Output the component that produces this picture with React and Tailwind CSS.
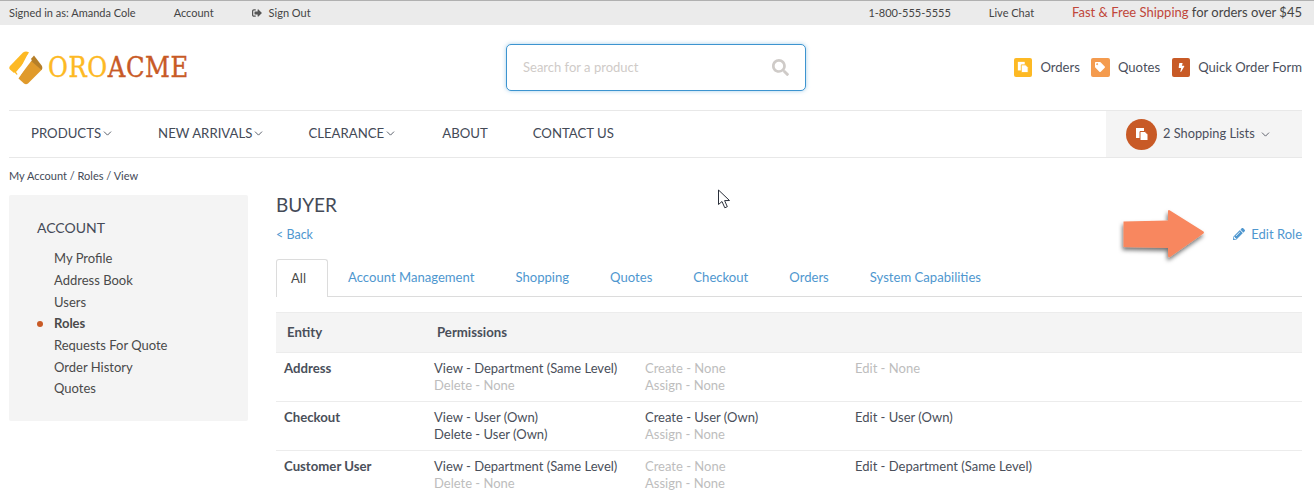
import React from "react";
import { FaSearch, FaPencilAlt, FaSignOutAlt, FaTag, FaBolt } from "react-icons/fa";
import { ChevronDown } from "lucide-react";

const Chev = ({ cls = "" }) => <ChevronDown size={13} strokeWidth={1.6} className={cls} />;

const Docs = ({ size = 12, back = "#fff", front = "#fff", cut = "#c85a26" }) => (
  <svg width={size} height={size} viewBox="0 0 14 14">
    <rect x="1" y="1" width="8" height="10" fill={back} />
    <path d="M5 4.5h5l3 3v6H5z" fill={front} stroke={cut} strokeWidth="1" />
  </svg>
);

const NavItem = ({ label, chev, cls }) => (
  <div className={`mb-[1px] flex items-center ${cls}`}>
    <span>{label}</span>
    {chev && <Chev cls="mt-[1px]" />}
  </div>
);

const rows = [
  {
    name: "Address",
    cells: [
      [["View - Department (Same Level)", 1], ["Delete - None", 0]],
      [["Create - None", 0], ["Assign - None", 0]],
      [["Edit - None", 0]],
    ],
  },
  {
    name: "Checkout",
    cells: [
      [["View - User (Own)", 1], ["Delete - User (Own)", 1]],
      [["Create - User (Own)", 1], ["Assign - None", 0]],
      [["Edit - User (Own)", 1]],
    ],
  },
  {
    name: "Customer User",
    cells: [
      [["View - Department (Same Level)", 1], ["Delete - None", 0]],
      [["Create - None", 0], ["Assign - None", 0]],
      [["Edit - Department (Same Level)", 1]],
    ],
  },
];

const side = ["My Profile", "Address Book", "Users", "Roles", "Requests For Quote", "Order History", "Quotes"];
const tabs = ["Account Management", "Shopping", "Quotes", "Checkout", "Orders", "System Capabilities"];

export default function App() {
  return (
    <div className="relative h-[497px] w-[1314px] overflow-hidden bg-white font-['Lato','Noto_Sans',sans-serif] text-[#4a4a4a]">
      {/* top bar */}
      <div className="flex h-[25px] items-center border-t border-[#b0b0b0] bg-[#ebebeb] pl-[9px] pr-3 text-[11px] text-[#444]">
        <span>Signed in as: Amanda Cole</span>
        <span className="ml-[38px]">Account</span>
        <span className="ml-[38px] flex items-center gap-[7px]">
          <FaSignOutAlt size={10} className="text-[#555]" />
          Sign Out
        </span>
        <span className="ml-auto">1-800-555-5555</span>
        <span className="ml-[38px]">Live Chat</span>
        <span className="ml-[38px] text-[13px]">
          <span className="text-[#c0463a]">Fast &amp; Free Shipping</span> for orders over $45
        </span>
      </div>

      {/* header */}
      <div className="relative flex h-[85px] items-center pl-[9px] pr-3">
        <div className="flex items-center">
          <svg width="34" height="34" viewBox="0 0 34 34">
            <path d="M14 1.5 Q17 -0.5 20 1.5 L5 22 L1 18.5 Q-0.5 17 1 15z" fill="#fdb924" />
            <path d="M15 2.5 L19.5 1.5 L8 24 L4 20z" fill="#fdb924" />
            <path d="M21 9 L32.5 16 Q34 17 32.5 19 L19 32.5 Q17 34 15 32.5 L9.5 27.5z" fill="#e09a2b" />
            <path d="M21 9 L25 4.5 L33 15 Q34 17 32.5 19z" fill="#b67f28" />
            <path d="M19.5 6.5 L23 9 L10.5 25.5 L7 21z" fill="#fff" />
          </svg>
          <span className="ml-[5px] font-['DejaVu_Serif',serif] text-[27px] leading-none tracking-[0.55px] [-webkit-text-stroke:0.35px] [font-stretch:condensed]">
            <span className="text-[#fdb924]">ORO</span>
            <span className="text-[#c85a26]">ACME</span>
          </span>
        </div>

        <div className="absolute left-[506px] top-[19px] flex h-[47px] w-[300px] items-center justify-between rounded-[5px] border border-[#3c94d0] bg-white pl-[16px] pr-[16px] text-[13px] text-[#cfcbc8] shadow-[0_0_4px_rgba(60,148,208,0.45)]">
          <span>Search for a product</span>
          <FaSearch size={17} className="text-[#cfcbc8]" />
        </div>

        <div className="ml-auto flex items-center text-[13.1px] text-[#4b4f5c]">
          <span className="flex h-[19px] w-[18px] items-center justify-center rounded-[2px] bg-[#fdb924]">
            <Docs size={12} cut="#fdb924" />
          </span>
          <span className="ml-[8px]">Orders</span>
          <span className="ml-[11px] flex h-[19px] w-[19px] items-center justify-center rounded-[2px] bg-[#f49b4e]">
            <FaTag size={10} className="text-white" />
          </span>
          <span className="ml-[8px]">Quotes</span>
          <span className="ml-[12px] flex h-[19px] w-[18px] items-center justify-center rounded-[2px] bg-[#c85a26]">
            <FaBolt size={9} className="text-white" />
          </span>
          <span className="ml-[8px]">Quick Order Form</span>
        </div>
      </div>

      {/* nav */}
      <div className="ml-[9px] mr-3 flex h-[48px] items-center border-y border-[#e8e8e8] text-[13.2px] text-[#444a57]">
        <NavItem label="PRODUCTS" chev cls="ml-[22px]" />
        <NavItem label="NEW ARRIVALS" chev cls="ml-[44px]" />
        <NavItem label="CLEARANCE" chev cls="ml-[43px]" />
        <NavItem label="ABOUT" cls="ml-[45px]" />
        <NavItem label="CONTACT US" cls="ml-[45px]" />
        <div className="ml-auto flex h-full w-[196px] items-center bg-[#f4f4f4] pl-5 text-[#4b4f5c]">
          <span className="flex h-[31px] w-[31px] items-center justify-center rounded-full bg-[#c85a26]">
            <Docs size={14} />
          </span>
          <span className="mb-[1px] ml-[6px] text-[12.8px]">2 Shopping Lists</span>
          <Chev cls="ml-[4px]" />
        </div>
      </div>

      {/* breadcrumb */}
      <div className="ml-[9px] mt-[10px] text-[11px] leading-[15px] text-[#444a57]">My Account / Roles / View</div>

      {/* main */}
      <div className="mt-[12px] flex pl-[9px] pr-3">
        <aside className="h-[226px] w-[239px] shrink-0 rounded-[2px] bg-[#f4f4f4] pl-[28px] pt-[23px]">
          <div className="text-[14px] leading-[20px] text-[#444a57]">ACCOUNT</div>
          <ul className="mt-[10.4px] text-[13px] text-[#4a4a4a]">
            {side.map((s) => (
              <li key={s} className={`relative h-[21.65px] pl-[17px] leading-[21px] ${s === "Roles" ? "font-bold" : ""}`}>
                {s === "Roles" && (
                  <span className="absolute left-0 top-[8px] h-[6px] w-[6px] rounded-full bg-[#c85a26]" />
                )}
                {s}
              </li>
            ))}
          </ul>
        </aside>

        <main className="ml-[28px] min-w-0 flex-1">
          <h1 className="text-[19px] leading-[20px] text-[#444a57]">BUYER</h1>
          <div className="mt-[11px] flex h-[18px] items-center justify-between text-[13px] leading-[18px] text-[#4f97cf]">
            <span className="text-[12.5px]">&lt; Back</span>
            <span className="flex -translate-y-px items-center gap-[6px]">
              <FaPencilAlt size={12} />
              Edit Role
            </span>
          </div>

          {/* tabs */}
          <div className="mt-[15px] flex h-[38px] items-stretch gap-[41px] border-b border-[#dcdcdc] text-[13.1px] text-[#4f97cf]">
            <div className="-mb-px -mr-[21px] flex w-[52px] items-center rounded-t-[3px] border border-b-0 border-[#dcdcdc] bg-white pl-[14px] text-[#4a4a4a]">
              All
            </div>
            {tabs.map((t) => (
              <div key={t} className="flex items-center">
                {t}
              </div>
            ))}
          </div>

          {/* table */}
          <div className="mt-[15px] text-[13px]">
            <div className="flex h-[41px] items-center border-y border-[#ececec] bg-[#f4f4f4] text-[13.2px] font-bold text-[#4a4f5a]">
              <span className="w-[161px] pl-[11px]">Entity</span>
              <span>Permissions</span>
            </div>
            {rows.map((r) => (
              <div key={r.name} className="flex h-[49px] border-b border-[#ececec] pt-[7px] leading-[17px]">
                <div className="w-[158px] pl-2 text-[13.2px] font-bold text-[#4a4f5a]">{r.name}</div>
                {r.cells.map((c, i) => (
                  <div key={i} className={i === 0 ? "w-[211px]" : "w-[210px]"}>
                    {c.map(([t, on]) => (
                      <div key={t} className={on ? "text-[#4a4f5a]" : "text-[#bdbdbd]"}>
                        {t}
                      </div>
                    ))}
                  </div>
                ))}
              </div>
            ))}
          </div>
        </main>
      </div>

      {/* annotation arrow */}
      <svg className="absolute left-[1118px] top-[205px]" width="92" height="62" viewBox="0 0 92 62">
        <defs>
          <filter id="s" x="-20%" y="-20%" width="140%" height="150%">
            <feDropShadow dx="-1" dy="3" stdDeviation="2" floodColor="#000" floodOpacity="0.55" />
          </filter>
        </defs>
        <path
          d="M5.5 16.5 L50 15.5 L50 6 Q50.5 4.5 52 5.5 L85.5 26.5 Q86.5 27.5 85.5 28.5 L52 52 Q50.5 53 50 51 L50 43 L5.5 42 Z"
          fill="#f8875e"
          filter="url(#s)"
        />
      </svg>

      {/* mouse cursor */}
      <svg className="absolute left-[717px] top-[189px]" width="14" height="21" viewBox="0 0 14 21">
        <path d="M1.5 1 V15.5 L5 12.5 L7.8 18.8 L10.3 17.7 L7.6 11.6 L12.5 11.5 Z" fill="#fff" stroke="#2a2f3a" strokeWidth="1" strokeLinejoin="round" />
      </svg>
    </div>
  );
}
